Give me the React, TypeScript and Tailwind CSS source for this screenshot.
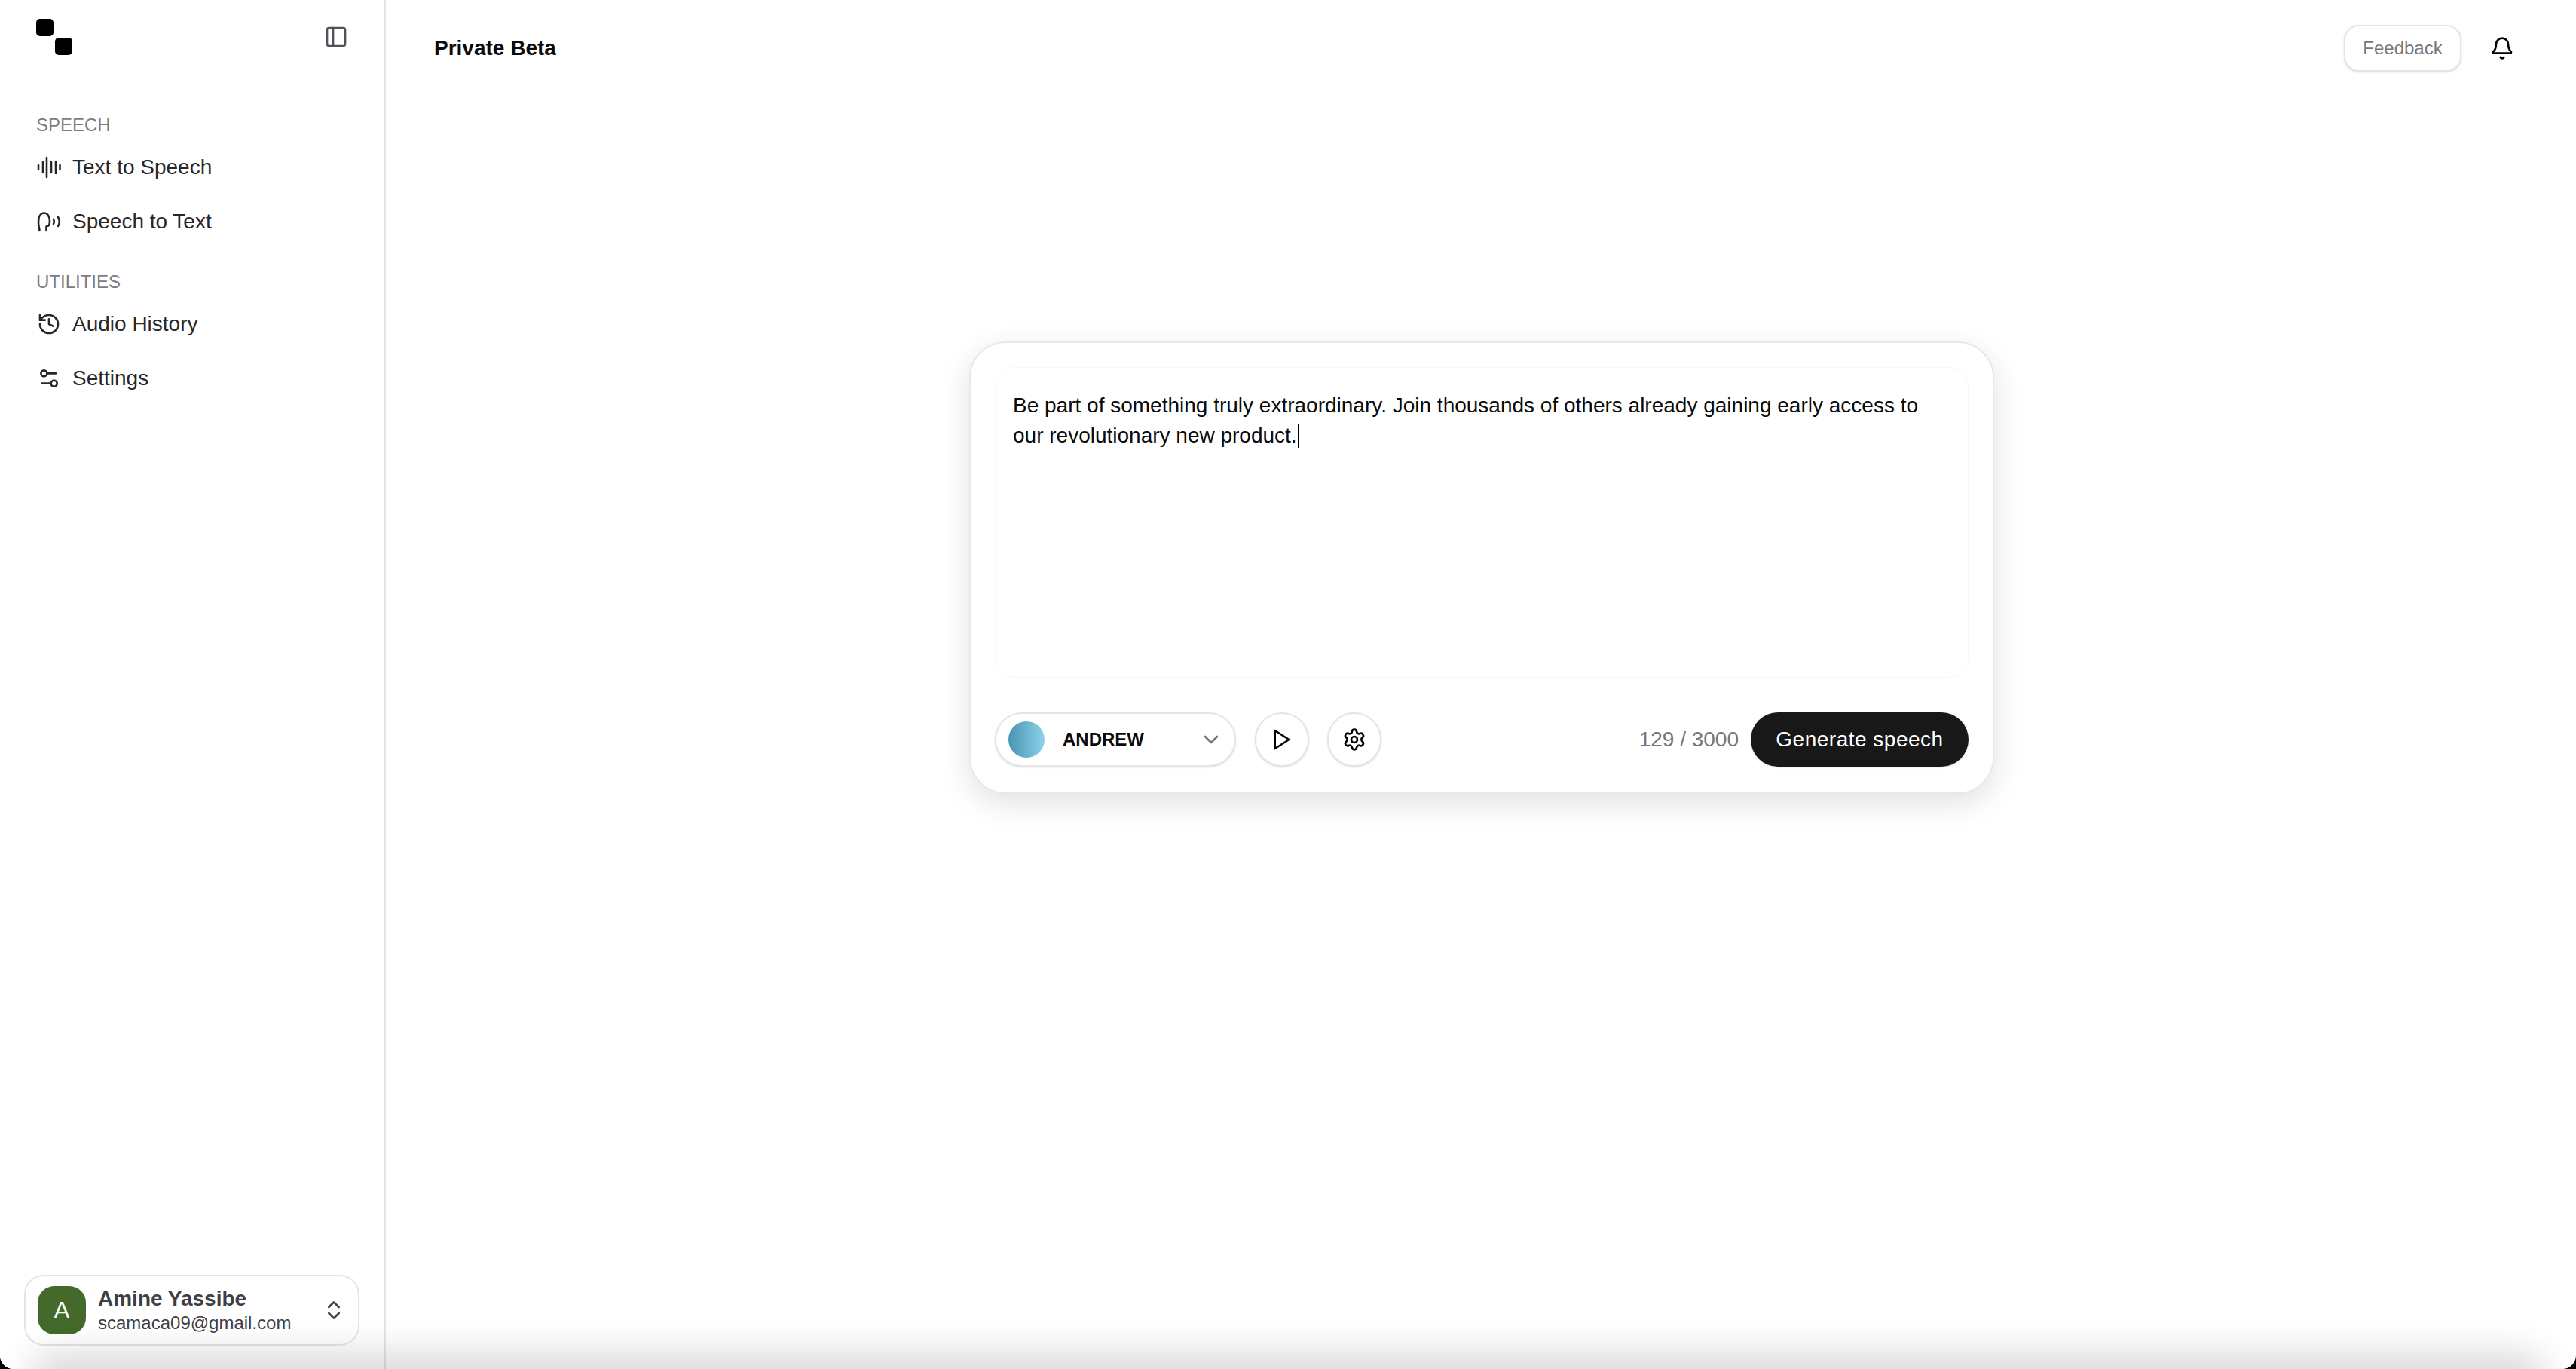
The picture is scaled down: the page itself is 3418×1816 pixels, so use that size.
import { Bell, ChevronDown, ChevronsUpDown, History, PanelLeft, Settings, Settings2 } from 'lucide-react';

function SpeechIcon() {
  return (
    <svg width="32" height="32" viewBox="0 0 32 32" fill="none" stroke="currentColor" strokeWidth="2.6" strokeLinecap="round">
      <path d="M2 13v6M8 9v14M13 3v26M19 9v14M25 8v16M30.500 13v6" />
    </svg>
  );
}

function ListenIcon() {
  return (
    <svg width="32" height="32" viewBox="0 0 32 32" fill="none" stroke="currentColor" strokeWidth="2.6" strokeLinecap="round" strokeLinejoin="round">
      <path d="M3.500 28c0-3-1.500-5-1.500-11C2 9 5 4.500 9.500 4.500S17 9 17 15c0 2-.3 5-1.200 6-1 1-2.800.5-3.300 1.500v5.500" />
      <path d="M22 13c1 2 1 4 0 6M28 10c2.500 4 2.500 8 0 12" />
    </svg>
  );
}

function NavItem({ icon, label }: { icon: React.ReactNode; label: string }) {
  return (
    <div className="flex h-[72px] items-center gap-[15px] text-[#27272a]">
      <span className="flex w-[33px] justify-center">{icon}</span>
      <span className="text-[28px] leading-none">{label}</span>
    </div>
  );
}

function Sidebar() {
  return (
    <aside className="flex w-[512px] shrink-0 flex-col border-r-2 border-[#e5e5e5] bg-white">
      <div className="flex items-start justify-between pt-[25px] pl-12 pr-[48px]">
        <div className="flex flex-col">
          <div className="h-[23px] w-[23px] rounded-[5px] bg-black" />
          <div className="mt-[2px] ml-[25px] h-[23px] w-[23px] rounded-[5px] bg-black" />
        </div>
        <PanelLeft className="mt-[8px] h-[32px] w-[32px] text-[#52525b]" strokeWidth={2} />
      </div>

      <nav className="flex flex-1 flex-col pl-12 pt-[73px]">
        <div className="text-[24px] leading-[40px] text-[#7c7c82]">SPEECH</div>
        <NavItem icon={<SpeechIcon />} label="Text to Speech" />
        <NavItem icon={<ListenIcon />} label="Speech to Text" />
        <div className="mt-[24px] text-[24px] leading-[40px] text-[#7c7c82]">UTILITIES</div>
        <NavItem icon={<History size={32} strokeWidth={2} />} label="Audio History" />
        <NavItem icon={<Settings2 size={32} strokeWidth={2} />} label="Settings" />
      </nav>

      <div className="px-8 pb-[31px]">
        <div className="flex h-[94px] w-[445px] items-center rounded-[26px] border-2 border-[#e5e5e5] bg-white pl-4 pr-[16px]">
          <div className="flex h-[64px] w-[64px] shrink-0 items-center justify-center rounded-[22px] bg-[#436a2a] text-[32px] text-white">
            A
          </div>
          <div className="ml-4 flex-1 text-[#3f3f46]">
            <div className="text-[28px] font-bold leading-[34px]">Amine Yassibe</div>
            <div className="text-[24px] leading-[30px]">scamaca09@gmail.com</div>
          </div>
          <ChevronsUpDown size={32} className="text-[#3f3f46]" strokeWidth={2} />
        </div>
      </div>
    </aside>
  );
}

function Composer() {
  return (
    <div className="flex h-[600px] w-[1360px] flex-col rounded-[48px] border-2 border-[#e8e8e8] bg-white px-8 pb-[34px] pt-8 shadow-[0_12px_40px_rgba(0,0,0,0.12)]">
      <div className="h-[412px] rounded-[26px] border border-[#f8f8f8] pl-[23px] pr-6 pt-[30px] text-[28px] leading-[40px] text-[#0a0a0a]">
        <p className="w-[1220px]">
          Be part of something truly extraordinary. Join thousands of others already gaining early access to our
          revolutionary new product.
          <span className="ml-px inline-block h-[31px] w-[2px] bg-black align-[-7px]" />
        </p>
      </div>
      <div className="mt-auto flex items-center">
        <div className="flex h-[72px] w-[320px] items-center rounded-full border-2 border-[#e5e5e5] bg-white pl-4 pr-[15px] shadow-sm">
          <div className="h-[48px] w-[48px] rounded-full bg-gradient-to-r from-[#4a94b4] to-[#8cd3ea]" />
          <span className="ml-6 flex-1 text-[24px] font-bold text-[#0a0a0a]">ANDREW</span>
          <ChevronDown size={32} className="text-[#777777]" strokeWidth={2} />
        </div>
        <button className="ml-[25px] flex h-[72px] w-[72px] items-center justify-center rounded-full border-2 border-[#e5e5e5] bg-white shadow-sm">
          <svg width="32" height="32" viewBox="0 0 24 24" fill="none" stroke="black" strokeWidth="2" strokeLinecap="round" strokeLinejoin="round">
            <polygon points="5 3 19 12 5 21 5 3" />
          </svg>
        </button>
        <button className="ml-[24px] flex h-[72px] w-[72px] items-center justify-center rounded-full border-2 border-[#e5e5e5] bg-white shadow-sm">
          <Settings size={32} strokeWidth={2} className="text-black" />
        </button>
        <span className="ml-auto text-[28px] text-[#777777]">129 / 3000</span>
        <button className="ml-[16px] h-[72px] w-[289px] rounded-full bg-[#181818] text-[28px] tracking-[0.5px] text-white shadow-sm">
          Generate speech
        </button>
      </div>
    </div>
  );
}

export default function App() {
  return (
    <div className="h-[1816px] w-[3418px] bg-black font-['Liberation_Sans',Arial,sans-serif]">
      <div className="relative flex h-full w-full overflow-hidden rounded-b-[18px] bg-white">
        <Sidebar />
        <main className="flex min-w-0 flex-1 flex-col">
          <header className="flex h-[127px] items-center justify-between pl-[64px] pr-[82px]">
            <h1 className="text-[28px] font-bold text-[#0a0a0a]">Private Beta</h1>
            <div className="flex items-center gap-[38px]">
              <button className="h-[62px] w-[156px] rounded-[20px] border-2 border-[#e5e5e5] bg-white text-[24px] text-[#777777] shadow-sm">
                Feedback
              </button>
              <Bell size={32} strokeWidth={2} className="text-black" />
            </div>
          </header>
          <div className="flex justify-start pl-[774px] pt-[326px]">
            <Composer />
          </div>
        </main>
        {/* soft shadow rising from the bottom edge, fades before the corners */}
        <div className="pointer-events-none absolute -bottom-[30px] left-[60px] right-[60px] h-[30px] rounded-full shadow-[0_0_50px_20px_rgba(0,0,0,0.16)]" />
      </div>
    </div>
  );
}
